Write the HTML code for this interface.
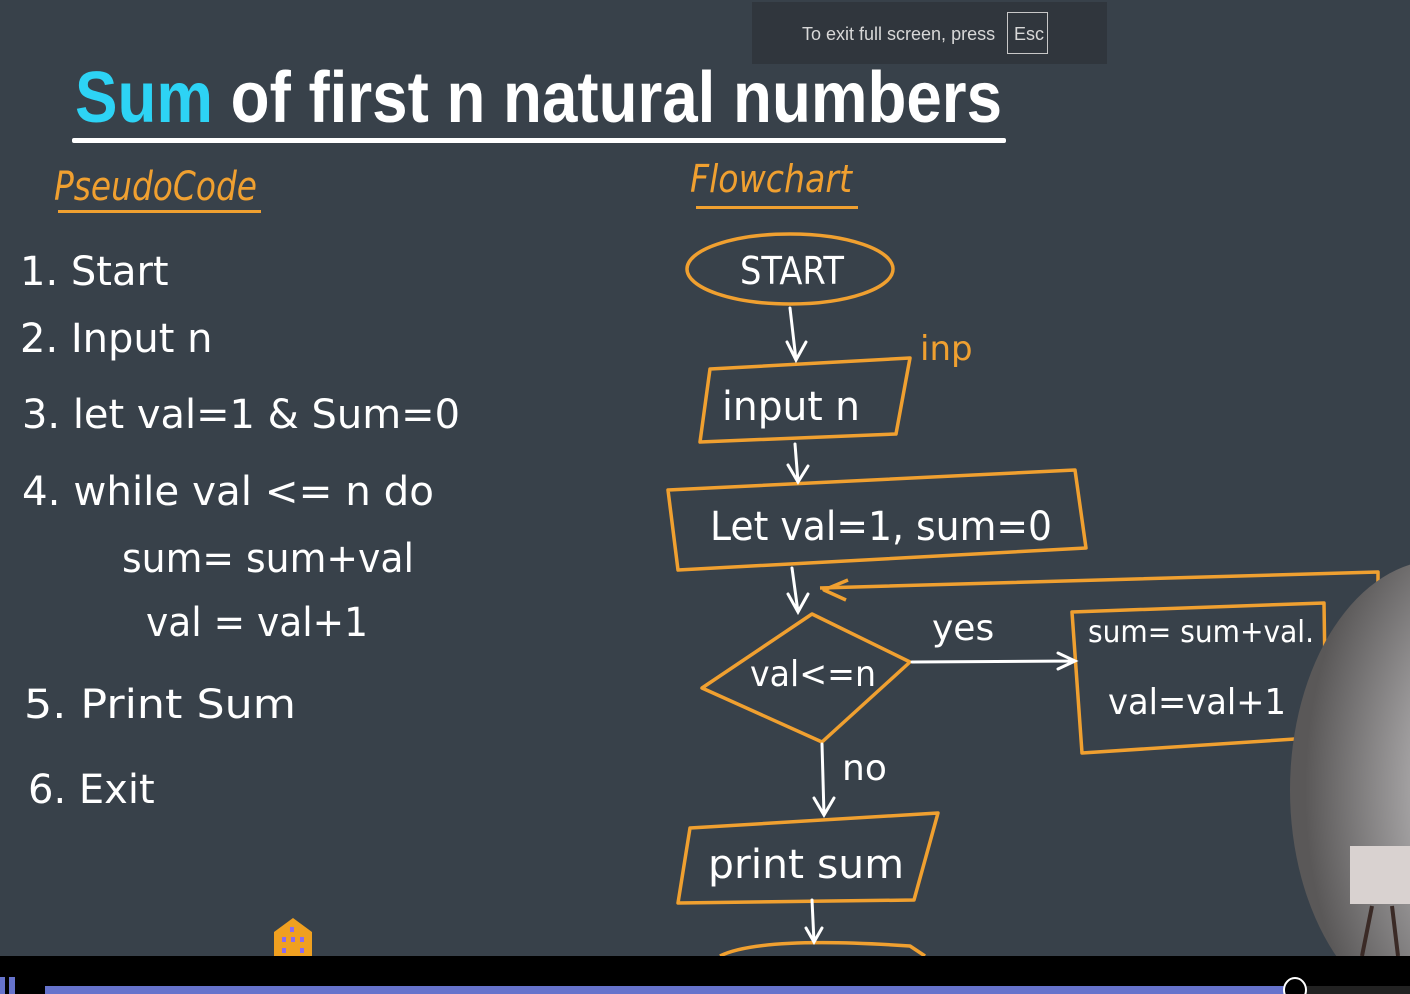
<!DOCTYPE html>
<html><head><meta charset="utf-8"><style>
html,body{margin:0;padding:0;background:#38414a;width:1410px;height:994px;overflow:hidden}
svg{display:block}
</style></head><body>
<svg width="1410" height="994" viewBox="0 0 1410 994" xmlns="http://www.w3.org/2000/svg">
<defs>
<radialGradient id="cam" cx="0.75" cy="0.5" r="0.7">
<stop offset="0" stop-color="#e8e8ea"/><stop offset="0.45" stop-color="#a9a7a8"/><stop offset="1" stop-color="#5a5858"/>
</radialGradient>
</defs>
<rect width="1410" height="994" fill="#38414a"/>
<text x="75" y="122" font-family="Liberation Sans Narrow, Liberation Sans, sans-serif" font-weight="bold" font-size="72" textLength="927" lengthAdjust="spacingAndGlyphs" fill="#fff"><tspan fill="#2dd3f5">Sum</tspan> of first n natural numbers</text>
<rect x="72" y="138" width="934" height="5" rx="2" fill="#fff"/>
<rect x="752" y="2" width="355" height="62" fill="#30363d"/>
<text x="802" y="40" font-family="Liberation Sans, sans-serif" font-size="18" fill="#d8d8d8">To exit full screen, press</text>
<rect x="1007.5" y="12.5" width="40" height="41" fill="none" stroke="#c8c8c8"/>
<text x="1014" y="40" font-family="Liberation Sans, sans-serif" font-size="18" fill="#d8d8d8">Esc</text>
<g font-family="DejaVu Sans, sans-serif" fill="#f0a030">
<text x="54" y="200" font-size="40" textLength="203" lengthAdjust="spacingAndGlyphs" font-style="italic">PseudoCode</text>
<text x="690" y="192" font-size="38" textLength="162" lengthAdjust="spacingAndGlyphs" font-style="italic">Flowchart</text>
<text x="920" y="360" font-size="34">inp</text>
</g>
<rect x="58" y="210" width="203" height="3" fill="#f0a030"/>
<rect x="696" y="206" width="162" height="3" fill="#f0a030"/>
<g font-family="DejaVu Sans, sans-serif" fill="#fff" font-size="40">
<text x="20" y="285">1. Start</text>
<text x="20" y="352">2. Input  n</text>
<text x="22" y="428" textLength="438" lengthAdjust="spacingAndGlyphs">3. let val=1 &amp; Sum=0</text>
<text x="22" y="505" textLength="412" lengthAdjust="spacingAndGlyphs">4. while val &lt;= n   do</text>
<text x="122" y="572" textLength="292" lengthAdjust="spacingAndGlyphs">sum= sum+val</text>
<text x="146" y="636" textLength="222" lengthAdjust="spacingAndGlyphs">val = val+1</text>
<text x="24" y="718" textLength="272" lengthAdjust="spacingAndGlyphs">5. Print  Sum</text>
<text x="28" y="803">6.  Exit</text>
</g>
<g fill="none" stroke="#f0a030" stroke-width="3.5" stroke-linejoin="round">
<ellipse cx="790" cy="269" rx="103" ry="35"/>
<path d="M710 369 L910 358 L896 434 L700 442 Z"/>
<path d="M668 490 L1075 470 L1086 548 L678 570 Z"/>
<path d="M702 688 L812 614 L910 662 L822 742 Z"/>
<path d="M1072 612 L1324 603 L1326 737 L1082 753 Z"/>
<path d="M690 828 L938 813 L914 900 L678 903 Z"/>
<path d="M820 588 L1378 572 L1378 600"/>
<path d="M848 580 L824 590 L846 600"/>
<path d="M720 956 Q760 936 910 946 L925 956"/>
</g>
<g fill="none" stroke="#fff" stroke-width="3" stroke-linecap="round">
<path d="M790 308 L796 360 M787 342 L796 360 L806 342"/>
<path d="M795 444 L798 482 M788 465 L798 482 L808 466"/>
<path d="M792 568 L798 612 M788 594 L798 612 L808 594"/>
<path d="M912 662 L1074 661 M1058 653 L1075 661 L1058 669"/>
<path d="M822 744 L824 815 M814 798 L824 815 L834 798"/>
<path d="M812 900 L814 942 M806 928 L814 942 L822 928"/>
</g>
<g font-family="DejaVu Sans, sans-serif" fill="#fff">
<text x="740" y="284" font-size="38" textLength="104" lengthAdjust="spacingAndGlyphs">START</text>
<text x="722" y="420" font-size="40" textLength="138" lengthAdjust="spacingAndGlyphs">input n</text>
<text x="710" y="540" font-size="40" textLength="342" lengthAdjust="spacingAndGlyphs">Let val=1, sum=0</text>
<text x="750" y="686" font-size="36" textLength="126" lengthAdjust="spacingAndGlyphs">val&lt;=n</text>
<text x="932" y="640" font-size="36">yes</text>
<text x="842" y="780" font-size="36">no</text>
<text x="1088" y="642" font-size="30" textLength="226" lengthAdjust="spacingAndGlyphs">sum= sum+val.</text>
<text x="1108" y="714" font-size="36" textLength="178" lengthAdjust="spacingAndGlyphs">val=val+1</text>
<text x="708" y="878" font-size="40" textLength="196" lengthAdjust="spacingAndGlyphs">print sum</text>
</g>
<ellipse cx="1440" cy="790" rx="150" ry="230" fill="url(#cam)"/>
<rect x="1350" y="846" width="60" height="58" fill="#d9d2d0"/>
<path d="M1372 906 L1362 956 M1392 906 L1398 956" stroke="#3a2a26" stroke-width="4"/>
<path d="M274 956 L274 932 L293 918 L312 932 L312 956 Z" fill="#f0a020"/>
<g fill="#8a6cf0"><rect x="290" y="927" width="4" height="5"/><rect x="282" y="937" width="4" height="5"/><rect x="291" y="937" width="4" height="5"/><rect x="300" y="937" width="4" height="5"/><rect x="282" y="948" width="4" height="5"/><rect x="300" y="948" width="4" height="5"/></g>
<rect x="0" y="956" width="1410" height="38" fill="#000"/>
<rect x="0" y="977" width="5" height="17" fill="#6673cc"/>
<rect x="9" y="977" width="6" height="17" fill="#6673cc"/>
<rect x="45" y="986" width="1250" height="8" fill="#6673cc"/>
<rect x="1295" y="986" width="115" height="8" fill="#222"/>
<ellipse cx="1295" cy="990" rx="11" ry="12" fill="#000" stroke="#fff" stroke-width="2"/>
</svg>
</body></html>
